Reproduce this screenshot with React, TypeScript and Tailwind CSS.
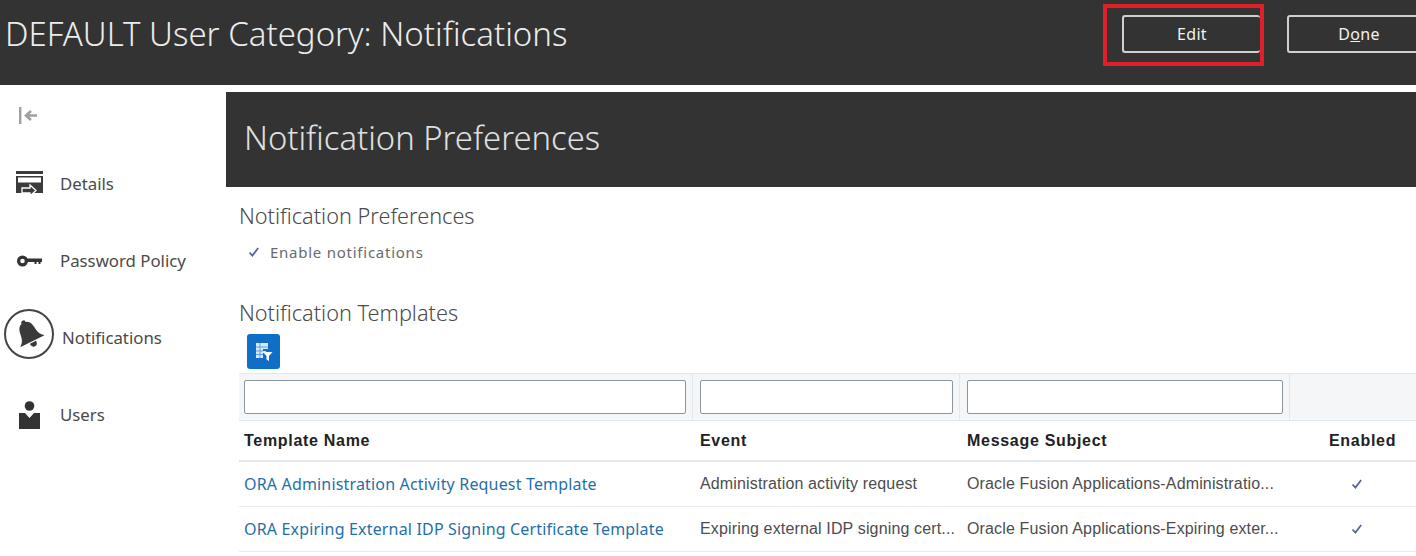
import React from "react";

const sans = "font-['Noto_Sans','Open_Sans',sans-serif]";

function NavItem({ icon, label, circled }: { icon: React.ReactNode; label: string; circled?: boolean }) {
  return (
    <div className="flex h-[77px] items-center">
      <div className={circled ? "mb-[8px] ml-[4px] flex h-[50px] w-[50px] shrink-0 items-center justify-center rounded-full border-2 border-[#444]" : "ml-[4px] flex w-[51px] shrink-0 items-center justify-center"}>{icon}</div>
      <span className={`${circled ? "ml-[8px]" : "ml-[5px]"} whitespace-nowrap text-[16.8px] text-[#4a4a4a]`}>{label}</span>
    </div>
  );
}

function Check() {
  return (
    <svg width="12" height="12" viewBox="0 0 12 12" fill="none">
      <path d="M1.5 6.5 L4.4 9.6 L10.2 2" stroke="#55619f" strokeWidth="1.7" />
    </svg>
  );
}

function Filter({ w, pad }: { w: string; pad: string }) {
  return (
    <div className={`${w} ${pad} flex h-full shrink-0 items-center border-r border-[#e3e8ec]`}>
      <input className="h-[34px] w-full rounded-[2px] border border-[#8c969e] bg-white" />
    </div>
  );
}

const rows = [
  ["ORA Administration Activity Request Template", "Administration activity request", "Oracle Fusion Applications-Administratio..."],
  ["ORA Expiring External IDP Signing Certificate Template", "Expiring external IDP signing cert...", "Oracle Fusion Applications-Expiring exter..."],
];

export default function App() {
  return (
    <div className={`h-[556px] w-[1416px] overflow-hidden bg-white ${sans}`}>
      <header className="relative flex h-[85px] items-center bg-[#333333] pb-[17px] pl-[5px]">
        <h1 className="flex-1 whitespace-nowrap text-[33px] font-light text-[#ececec]">DEFAULT User Category: Notifications</h1>
        <button className="ml-auto h-[38px] w-[138px] shrink-0 rounded-[3px] border-2 border-r-0 border-[#d0d0d0] text-[16px] tracking-[0.3px] text-[#f2f2f2]">Edit</button>
        <button className="-mr-[31px] ml-[27px] h-[38px] w-[160px] shrink-0 rounded-[3px] border-2 border-[#d0d0d0] pr-[16px] text-[16px] tracking-[0.3px] text-[#f2f2f2]">
          D<span className="underline">o</span>ne
        </button>
        <div className="pointer-events-none absolute left-[1103px] top-[4px] h-[62px] w-[161px] border-[4px] border-[#e01f26]" />
      </header>
      <div className="mt-[7px] flex">
        <nav className="w-[226px] shrink-0">
          <div className="mb-[7px] flex h-[46px] items-center pl-[19px]">
            <svg width="18" height="17" viewBox="0 0 18 17" fill="none" stroke="#a0a0a0">
              <path d="M1.2 0 V17" strokeWidth="2.4" />
              <path d="M18 8.5 H8 M12 4 L7 8.5 L12 13" strokeWidth="2.6" />
            </svg>
          </div>
          <NavItem label="Details" icon={
            <svg width="27" height="25" viewBox="0 0 27 25">
              <path d="M0 0 H27 V3 H0Z" fill="#3b3b3b" />
              <path d="M0 5 H27 V22 H0Z" fill="#3b3b3b" />
              <path d="M2 6.5 H25 V11.5 H2Z" fill="#fff" />
              <path d="M6 17 H14 V14 L20 19.5 L14 25 V22 H6Z" fill="#3b3b3b" stroke="#fff" strokeWidth="1.3" />
            </svg>
          } />
          <NavItem label="Password Policy" icon={
            <svg width="25" height="12" viewBox="0 0 25 12" fill="none">
              <circle cx="5.5" cy="6" r="3.9" stroke="#333" strokeWidth="3.2" />
              <path d="M9 3.5 H25 V7 H23.5 V9 H21.5 V7 H19.5 V9 H17.5 V7 H9Z" fill="#333" />
            </svg>
          } />
          <NavItem circled label="Notifications" icon={
            <svg width="30" height="32" viewBox="0 0 26 28">
              <g transform="rotate(-26 13 14)" fill="#3a3a3a">
                <circle cx="13" cy="3" r="2" />
                <path d="M13 3 C7.5 3 6.5 7.5 6 12 C5.6 16 4 19 1 21 H25 C22 19 20.4 16 20 12 C19.5 7.5 18.5 3 13 3Z" />
                <path d="M10 22 H16 C16 25 14.5 26 13 26 C11.5 26 10 25 10 22Z" />
              </g>
            </svg>
          } />
          <NavItem label="Users" icon={
            <svg width="21" height="28" viewBox="0 0 21 28">
              <circle cx="10.5" cy="5" r="4.8" fill="#333" />
              <path d="M0 12 H6 L10.5 17 L15 12 H21 V28 H0Z" fill="#333" />
            </svg>
          } />
        </nav>
        <main className="min-w-0 flex-1">
          <div className="flex h-[95px] items-center bg-[#333333] pl-[18px]">
            <h2 className="pb-[3px] text-[32.8px] font-light text-[#e0e0e0]">Notification Preferences</h2>
          </div>
          <div className="pl-[13px] pt-[15px]">
            <h3 className="text-[21.7px] font-light leading-[27px] text-[#4a4a4a]">Notification Preferences</h3>
            <div className="mt-[14px] flex h-[18px] items-center pl-[9px]">
              <Check />
              <span className="ml-[10px] text-[15px] tracking-[0.75px] text-[#6a6a6a]">Enable notifications</span>
            </div>
            <h3 className="mt-[38px] text-[21.7px] font-light leading-[27px] text-[#4a4a4a]">Notification Templates</h3>
            <div className="ml-[8px] mt-[8px] flex h-[35px] w-[33px] items-center justify-center rounded-[3px] bg-[#0f6fc6]">
              <svg width="18" height="20" viewBox="0 0 18 20" fill="none">
                <path d="M1 1 H13 V7 H8 V9 H10.5 L12 11 H8 V16 H1Z" fill="#dbe9f7" />
                <path d="M1 5 H13 M5 1 V16 M1 9 H8 M1 12.5 H8" stroke="#5f9fdc" strokeWidth="1" />
                <path d="M8 10 H17.5 L14 14 V19 L11.5 17.5 V14Z" fill="#fff" />
              </svg>
            </div>
            <div className="mt-[4px] flex h-[48px] border-y border-[#e3e8ec] bg-[#f5f6f7]">
              <Filter w="w-[454px]" pad="pl-[5px] pr-[6px]" />
              <Filter w="w-[267px]" pad="pl-[7px] pr-[6px]" />
              <Filter w="w-[330px]" pad="pl-[7px] pr-[6px]" />
            </div>
            <div className="flex h-[41px] items-center border-b-2 border-[#e3e8ec] font-['Liberation_Sans',Arial,sans-serif] text-[16px] font-bold tracking-[0.7px] text-[#222]">
              <div className="w-[454px] shrink-0 pl-[5px]">Template Name</div>
              <div className="w-[267px] shrink-0 pl-[7px]">Event</div>
              <div className="w-[330px] shrink-0 pl-[7px]">Message Subject</div>
              <div className="w-[126px] shrink-0 pl-[39px]">Enabled</div>
            </div>
            {rows.map((r) => (
              <div key={r[0]} className="flex h-[45px] items-center border-b border-[#e8ebee] text-[16px]">
                <div className="w-[454px] shrink-0 pl-[5px] tracking-[0.17px] text-[#1f6fa8]">{r[0]}</div>
                <div className="w-[267px] shrink-0 whitespace-nowrap pl-[7px] font-['Liberation_Sans',Arial,sans-serif] tracking-[0.15px] text-[#4d4d4d]">{r[1]}</div>
                <div className="w-[330px] shrink-0 whitespace-nowrap pl-[7px] font-['Liberation_Sans',Arial,sans-serif] tracking-[0.15px] text-[#4d4d4d]">{r[2]}</div>
                <div className="flex w-[126px] shrink-0 justify-center pl-[8px]"><Check /></div>
              </div>
            ))}
          </div>
        </main>
      </div>
    </div>
  );
}
